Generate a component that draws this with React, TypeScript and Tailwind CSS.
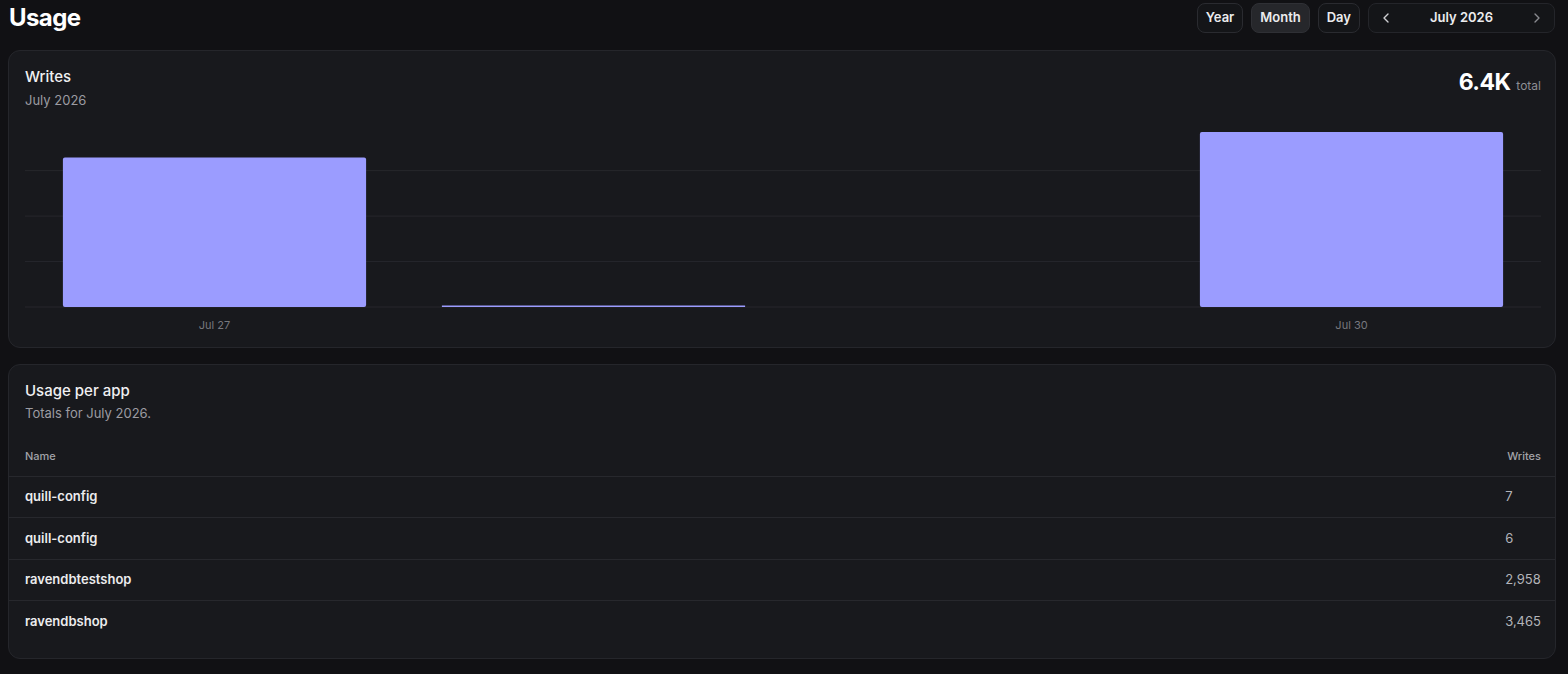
import { ChevronLeft, ChevronRight } from 'lucide-react';

const days = [
    { label: 'Jul 27', value: 2958, showLabel: true },
    { label: 'Jul 28', value: 13, showLabel: false },
    { label: 'Jul 29', value: 0, showLabel: false },
    { label: 'Jul 30', value: 3465, showLabel: true },
];

const apps = [
    { name: 'quill-config', writes: 7 },
    { name: 'quill-config', writes: 6 },
    { name: 'ravendbtestshop', writes: 2958 },
    { name: 'ravendbshop', writes: 3465 },
];

const WritesChart = () => {
    const width = 1516;
    const height = 223;
    const top = 22;
    const base = 197;
    const max = 3465;
    const band = width / days.length;
    // recharts-style ticks; the top one (dataMax) has no grid line
    const ticks = [0, 900, 1800, 2700];
    const y = (v: number) => base - (v / max) * (base - top);

    return (
        <svg width={width} height={height} className="block">
            {ticks.map((t) => (
                <line key={t} x1={0} x2={width} y1={y(t)} y2={y(t)} stroke="#26272c" strokeWidth={1} />
            ))}
            {days.map((d, i) => {
                const x = i * band + band * 0.1;
                const w = band * 0.8;
                const h = Math.max(base - y(d.value), d.value > 0 ? 1.5 : 0);
                return (
                    <g key={d.label}>
                        {h > 0 && <rect x={x} y={base - h} width={w} height={h} rx={h > 4 ? 2 : 0} fill="#9b9cff" />}
                        {d.showLabel && (
                            <text x={i * band + band / 2} y={219} textAnchor="middle" fontSize={11} fill="#77787e">
                                {d.label}
                            </text>
                        )}
                    </g>
                );
            })}
        </svg>
    );
};

export default function App() {
    return (
        <div
            className="min-h-screen bg-[#111114] pl-2 pr-3 pt-[2px] pb-4 text-[#ededef]"
            style={{ fontFamily: 'Inter, "Noto Sans", sans-serif' }}
        >
            {/* Header */}
            <div className="flex items-center justify-between h-[32px]">
                <h1 className="pl-px text-[24px] font-bold tracking-tight text-white">Usage</h1>
                <div className="flex items-center gap-2 mr-px">
                    <button className="h-[30px] px-2 rounded-lg border border-[#2a2b30] bg-[#141518] text-[13px] font-semibold text-[#ececee]">
                        Year
                    </button>
                    <button className="h-[30px] px-2 rounded-lg border border-[#2f3035] bg-[#26272b] text-[13px] font-semibold text-[#ececee]">
                        Month
                    </button>
                    <button className="h-[30px] px-2 rounded-lg border border-[#2a2b30] bg-[#141518] text-[13px] font-semibold text-[#ececee]">
                        Day
                    </button>
                    <div className="flex items-center justify-between w-[187px] h-[30px] px-[9px] rounded-lg border border-[#24252a] bg-[#141518]">
                        <ChevronLeft className="w-4 h-4 text-[#d0d0d4]" strokeWidth={2} />
                        <span className="text-[13px] font-semibold text-[#ececee]">July 2026</span>
                        <ChevronRight className="w-4 h-4 text-[#8a8b90]" strokeWidth={2} />
                    </div>
                </div>
            </div>

            {/* Writes card */}
            <div className="mt-4 rounded-xl border border-[#25262b] bg-[#18191d] pl-4 pr-[14px] pt-4 pb-[14px]">
                <div className="flex items-start justify-between">
                    <div>
                        <div className="text-[15px] font-medium leading-5 text-[#f0f0f2]">Writes</div>
                        <div className="mt-[3px] text-[13px] leading-5 text-[#9c9ca2]">July 2026</div>
                    </div>
                    <div className="flex items-baseline gap-[6px] pt-px">
                        <span className="text-[23px] font-bold leading-7 tracking-tight text-white">6.4K</span>
                        <span className="text-[12px] text-[#8d8e94]">total</span>
                    </div>
                </div>
                <WritesChart />
            </div>

            {/* Usage per app */}
            <div className="mt-4 rounded-xl border border-[#25262b] bg-[#18191d] pb-[15px]">
                <div className="px-4 pt-4 pb-[13px]">
                    <div className="text-[15px] font-medium leading-5 text-[#f0f0f2]">Usage per app</div>
                    <div className="mt-[2px] text-[13px] leading-5 text-[#9c9ca2]">Totals for July 2026.</div>
                </div>
                <table className="w-full border-collapse">
                    <thead>
                        <tr className="border-b border-[#27282d]">
                            <th className="h-10 pl-4 text-left text-[11px] font-medium text-[#a2a3a8]">Name</th>
                            <th className="h-10 pl-4 pr-[14px] w-px text-right text-[11px] font-medium text-[#a2a3a8]">Writes</th>
                        </tr>
                    </thead>
                    <tbody>
                        {apps.map((a, i) => (
                            <tr key={i} className={i < apps.length - 1 ? 'border-b border-[#27282d]' : ''}>
                                <td className="h-[41.67px] pl-4 text-[13px] font-semibold text-[#ececee]">{a.name}</td>
                                <td className="h-[41.67px] pl-4 pr-[14px] text-left text-[13px] text-[#b3b4b9]">
                                    {a.writes.toLocaleString('en-US')}
                                </td>
                            </tr>
                        ))}
                    </tbody>
                </table>
            </div>
        </div>
    );
}
